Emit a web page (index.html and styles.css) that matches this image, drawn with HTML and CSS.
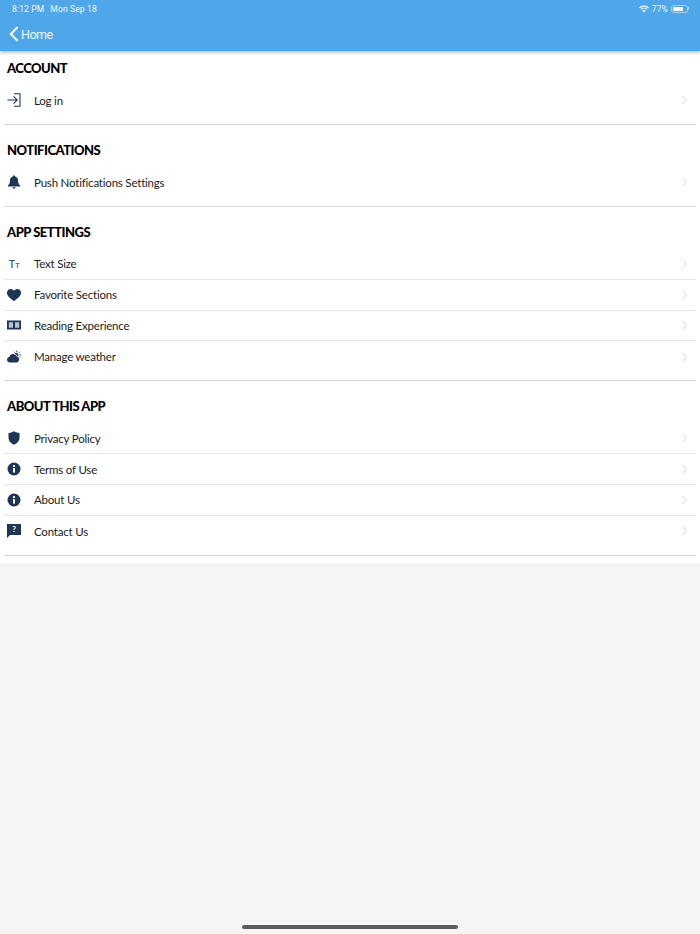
FILE: index.html
```html
<!DOCTYPE html>
<html lang="en">
<head>
    <meta charset="UTF-8">
    <meta name="viewport" content="width=device-width, initial-scale=1.0">
    <title>Settings</title>
    <link rel="stylesheet" href="styles.css">
</head>
<body>
    <svg class="sprite" xmlns="http://www.w3.org/2000/svg">
        <symbol id="chevron" viewBox="0 0 8 12">
            <path d="M1.500 1l5 5-5 5" fill="none" stroke="currentColor" stroke-width="1.300"/>
        </symbol>
        <symbol id="info" viewBox="0 0 14 14">
            <circle cx="7" cy="7" r="6.500" fill="currentColor"/>
            <rect x="6" y="3.200" width="2" height="1.800" fill="#fff"/>
            <rect x="6" y="6" width="2" height="4.600" fill="#fff"/>
        </symbol>
    </svg>

    <header class="topbar">
        <div class="status">
            <span class="status-time">8:12 PM</span>
            <span class="status-date">Mon Sep 18</span>
            <span class="status-right">
                <svg class="wifi" viewBox="0 0 12 9" width="10" height="8">
                    <path d="M0.500 3.200a8 8 0 0 1 11 0M2.300 5a5.400 5.400 0 0 1 7.400 0" fill="none" stroke="#fff" stroke-width="1.300"/>
                    <path d="M4 6.600a3 3 0 0 1 4 0L6 8.800z" fill="#fff"/>
                </svg>
                <span class="status-pct">77%</span>
                <span class="battery"><span class="battery-fill"></span></span>
                <span class="battery-tip"></span>
            </span>
        </div>
        <div class="nav">
            <svg class="nav-back" viewBox="0 0 10 16" width="10" height="16">
                <path d="M8.500 1.200L1.800 8l6.700 6.800" fill="none" stroke="#fff" stroke-width="2"/>
            </svg>
            <span class="nav-title">Home</span>
        </div>
    </header>

    <main class="settings">
        <section class="group">
            <h2>ACCOUNT</h2>
            <a class="row">
                <svg class="icon" viewBox="0 0 14 14" width="14" height="14">
                    <path d="M7 .8h6v12.400H7" fill="none" stroke="currentColor" stroke-width="1.100"/>
                    <path d="M.5 7h9.500M6.500 3.300L10.200 7l-3.700 3.700" fill="none" stroke="currentColor" stroke-width="1.100"/>
                </svg>
                <span>Log in</span>
                <svg class="chev"><use href="#chevron"/></svg>
            </a>
        </section>

        <section class="group">
            <h2>NOTIFICATIONS</h2>
            <a class="row">
                <svg class="icon" viewBox="0 0 14 14" width="14" height="14">
                    <path d="M7 0.500c.8 0 1.200.5 1.200 1.100 2 .6 2.900 2.200 2.900 4.300 0 2.300.9 3.500 2 4.700v.9H.9v-.9c1.100-1.200 2-2.400 2-4.700 0-2.100.9-3.700 2.900-4.300C5.800 1 6.200.5 7 .5z" fill="currentColor"/>
                    <path d="M5.400 12.200h3.200a1.600 1.500 0 0 1-3.200 0z" fill="currentColor"/>
                </svg>
                <span>Push Notifications Settings</span>
                <svg class="chev"><use href="#chevron"/></svg>
            </a>
        </section>

        <section class="group">
            <h2>APP SETTINGS</h2>
            <a class="row">
                <span class="icon icon-text"><span class="tt-big">T</span><span class="tt-small">T</span></span>
                <span>Text Size</span>
                <svg class="chev"><use href="#chevron"/></svg>
            </a>
            <a class="row">
                <svg class="icon" viewBox="0 0 14 14" width="14" height="14">
                    <path d="M7 13.200C3 10.200 0 8 0 4.800 0 2.600 1.700 1 3.700 1 5 1 6.300 1.700 7 2.900 7.700 1.700 9 1 10.300 1 12.300 1 14 2.600 14 4.800 14 8 11 10.200 7 13.200z" fill="currentColor"/>
                </svg>
                <span>Favorite Sections</span>
                <svg class="chev"><use href="#chevron"/></svg>
            </a>
            <a class="row">
                <svg class="icon" viewBox="0 0 14 14" width="14" height="14">
                    <path d="M0 2.500h14v9H0z" fill="currentColor"/>
                    <path d="M1.800 4.300h4.200v5.400H1.800zM8 4.300h4.200v5.400H8z" fill="#b9c2cf"/>
                </svg>
                <span>Reading Experience</span>
                <svg class="chev"><use href="#chevron"/></svg>
            </a>
            <a class="row">
                <svg class="icon" viewBox="0 0 14 14" width="14" height="14">
                    <path d="M3 12.500c-1.700 0-3-1.200-3-2.700s1-2.500 2.300-2.800C2.700 5.200 4.300 4 6 4c1.800 0 3.200 1 3.700 2.600 1.400.1 2.400 1.300 2.400 2.900s-1.200 3-2.700 3z" fill="currentColor"/>
                    <path d="M7.600 3.400a2.400 2.400 0 0 1 3.800 2.600L10.500 6.200C10 4.900 9 4 7.600 3.400z" fill="currentColor"/>
                    <path d="M9.800 .8v1.400M13.800 4.800h-1.400M12.800 1.800l-1 1M12.800 7.400l-.8-.8M6.800 1.800l.7.8" stroke="currentColor" stroke-width="1"/>
                </svg>
                <span>Manage weather</span>
                <svg class="chev"><use href="#chevron"/></svg>
            </a>
        </section>

        <section class="group">
            <h2>ABOUT THIS APP</h2>
            <a class="row">
                <svg class="icon" viewBox="0 0 14 14" width="14" height="14">
                    <path d="M7 .3c1.800 1 3.600 1.500 5.500 1.600v5c0 3-2.300 5.300-5.500 6.800C3.800 12.200 1.500 9.900 1.500 6.900v-5C3.400 1.800 5.200 1.300 7 .3z" fill="currentColor"/>
                </svg>
                <span>Privacy Policy</span>
                <svg class="chev"><use href="#chevron"/></svg>
            </a>
            <a class="row">
                <svg class="icon" width="14" height="14"><use href="#info"/></svg>
                <span>Terms of Use</span>
                <svg class="chev"><use href="#chevron"/></svg>
            </a>
            <a class="row">
                <svg class="icon" width="14" height="14"><use href="#info"/></svg>
                <span>About Us</span>
                <svg class="chev"><use href="#chevron"/></svg>
            </a>
            <a class="row">
                <span class="icon icon-help">?</span>
                <span>Contact Us</span>
                <svg class="chev"><use href="#chevron"/></svg>
            </a>
        </section>
    </main>

    <div class="home-bar"></div>
</body>
</html>
```

FILE: styles.css
```css
:root {
    --blue: #4fa6e8;
    --navy: #1f3556;
    --rule: #e4e6ee;
}

html, body {
    height: 100%;
}

body {
    margin: 0;
    background-color: #f5f5f5;
    color: #1c1c1c;
    font-family: 'Lato', 'Liberation Sans', sans-serif;
    position: relative;
    overflow: hidden;
}

.sprite {
    display: none;
}

.topbar {
    height: 51px;
    background-color: var(--blue);
    color: white;
    box-shadow: 0 1px 4px rgba(0,0,0,0.35);
    position: relative;
}

.status {
    height: 17px;
    padding: 0 11px 0 12px;
    display: flex;
    align-items: center;
    gap: 6px;
    font-family: 'Roboto', 'Liberation Sans', sans-serif;
    font-size: 8.5px;
    letter-spacing: 0.15px;
    color: #f0f7fd;
}

.status-right {
    margin-left: auto;
    display: flex;
    align-items: center;
    gap: 3px;
}

.battery {
    width: 17px;
    height: 8px;
    border: 1px solid rgba(255,255,255,0.5);
    border-radius: 2.5px;
    box-sizing: border-box;
    padding: 1px;
    display: flex;
}

.battery-fill {
    width: 77%;
    background-color: white;
    border-radius: 1px;
}

.battery-tip {
    width: 1px;
    height: 3px;
    margin-left: -3px;
    background-color: rgba(255,255,255,0.5);
}

.nav {
    height: 34px;
    padding-left: 9px;
    display: flex;
    align-items: center;
    gap: 2px;
}

.nav-title {
    font-family: 'Roboto', 'Liberation Sans', sans-serif;
    font-size: 12.5px;
    letter-spacing: -0.5px;
    color: #f0f7fd;
}

.settings {
    background-color: white;
    padding-bottom: 7.25px;
}

.group {
    margin: 0 4px;
    padding: 10px 0 8px;
    border-bottom: 1px solid #d8d8d8;
}

.group:first-child {
    padding-top: 2px;
}

.group h2 {
    margin: 0;
    padding-left: 3px;
    height: 32px;
    line-height: 30px;
    font-size: 13px;
    font-weight: 900;
    letter-spacing: -0.5px;
    color: black;
}

.row {
    height: 30.875px;
    box-sizing: border-box;
    padding: 0 8px 0 3px;
    display: flex;
    align-items: center;
    font-size: 11.5px;
    letter-spacing: -0.2px;
    border-bottom: 1px solid var(--rule);
}

.row:last-child {
    border-bottom: none;
}

.icon {
    width: 14px;
    height: 14px;
    flex: none;
    margin-right: 13px;
    color: var(--navy);
}

.icon-text {
    display: flex;
    align-items: baseline;
    justify-content: center;
    font-family: 'Liberation Sans', sans-serif;
    line-height: 14px;
}

.tt-big {
    font-size: 11px;
}

.tt-small {
    font-size: 8px;
}

.icon-help {
    height: 11px;
    margin-bottom: 3px;
    background-color: var(--navy);
    color: white;
    font-size: 8px;
    font-weight: 700;
    line-height: 11px;
    letter-spacing: 0;
    text-align: center;
    position: relative;
}

.icon-help::after {
    content: "";
    position: absolute;
    left: 0;
    top: 11px;
    border-top: 3px solid var(--navy);
    border-right: 3px solid transparent;
}

.chev {
    width: 7px;
    height: 10px;
    margin-left: auto;
    color: #e4e4e4;
}

.home-bar {
    position: absolute;
    left: 242px;
    bottom: 5px;
    width: 216px;
    height: 4px;
    border-radius: 2px;
    background-color: #5c5c5c;
}
```
